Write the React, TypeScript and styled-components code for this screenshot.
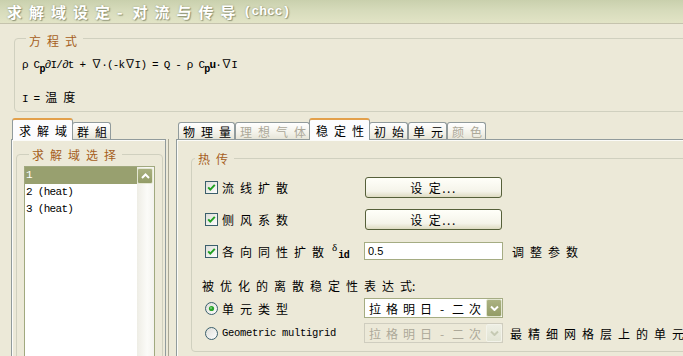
import React from "react"
import styled, { createGlobalStyle } from "styled-components"

const CJK = `"Noto Sans CJK SC", "Liberation Sans", sans-serif`
const MONO = `"Liberation Mono", "Noto Sans CJK SC", monospace`

const GlobalStyle = createGlobalStyle`
  html, body {
    margin: 0;
    padding: 0;
    background: #ece9d8;
    overflow: hidden;
  }
  body {
    font-family: ${CJK};
    font-size: 12px;
    color: #000;
  }
`

const Window = styled.div`
  width: 683px;
  height: 356px;
  overflow: hidden;
  background: #ece9d8;
  display: flex;
  flex-direction: column;
`

const TitleBar = styled.div`
  height: 23px;
  flex: none;
  display: flex;
  align-items: center;
  padding-left: 7px;
  background: linear-gradient(#c9d0ad 0%, #d6dbbb 45%, #e2e4c6 100%);
  border-bottom: 1px solid #c5c3ad;
  color: #fff;
  font-weight: bold;
  text-shadow: 1px 1px 1px rgba(95, 100, 70, 0.55), 0 0 2px rgba(95, 100, 70, 0.4);
  white-space: nowrap;
`

const TitleCJK = styled.span`
  font-family: ${CJK};
  font-size: 15px;
  letter-spacing: 7px;
`

const TitleDash = styled.span`
  font-family: ${CJK};
  font-size: 15px;
  margin-right: 10px;
`

const TitleLatin = styled.span`
  font-family: ${MONO};
  font-size: 13px;
  margin-left: 1px;
`

const Group = styled.fieldset<{ $pad: string; $mt: number; $ml: number; $mr: number }>`
  margin: ${p => p.$mt}px ${p => p.$mr}px 0 ${p => p.$ml}px;
  padding: ${p => p.$pad};
  min-width: 0;
  border: 1px solid #d0d0bf;
  border-radius: 4px;
`

const Legend = styled.legend<{ $dy: number; $x: number }>`
  margin-left: ${p => p.$x}px;
  padding: ${p => p.$dy}px 0 0 3px;
  line-height: 14px;
  font-size: 12px;
  letter-spacing: 6px;
  color: #a65f22;
`

const EqLine = styled.div<{ $mt?: number }>`
  margin-top: ${p => p.$mt || 0}px;
  height: 14px;
  line-height: 14px;
  font-family: ${MONO};
  font-size: 11px;
  letter-spacing: -0.8px;
  white-space: nowrap;
`

const Sub = styled.sub`
  font-size: 10px;
  font-weight: bold;
  vertical-align: -4px;
  line-height: 0;
`

const Bold = styled.b`
  font-weight: bold;
`

const Spaced = styled.span`
  font-family: ${CJK};
  font-size: 12px;
  letter-spacing: 6px;
`

const Lower = styled.div`
  display: flex;
  align-items: flex-start;
  margin-top: 6px;
  flex: 1;
  min-height: 0;
`

const Column = styled.div<{ $w?: number; $ml: number; $mr?: number }>`
  margin-left: ${p => p.$ml}px;
  margin-right: ${p => p.$mr || 0}px;
  width: ${p => (p.$w ? `${p.$w}px` : "auto")};
  flex: ${p => (p.$w ? "none" : "1")};
  display: flex;
  flex-direction: column;
`

const Splitter = styled.div`
  width: 10px;
  height: 300px;
  margin-top: 21px;
  flex: none;
  background: linear-gradient(to right, transparent 2px, #a9a795 2px, #a9a795 3px, transparent 3px);
`

const TabStrip = styled.div<{ $pl: number }>`
  display: flex;
  align-items: flex-end;
  height: 21px;
  padding-left: ${p => p.$pl}px;
  position: relative;
  z-index: 1;
`

const Tab = styled.div<{ $active?: boolean; $disabled?: boolean }>`
  box-sizing: border-box;
  height: ${p => (p.$active ? 22 : 17)}px;
  margin: 0 ${p => (p.$active ? -1 : 0)}px ${p => (p.$active ? -1 : 0)}px;
  padding: ${p => (p.$active ? "1px 5px 0 6px" : "0 3px 0 4px")};
  display: flex;
  align-items: center;
  border: 1px solid #919b9c;
  border-bottom: none;
  border-top: ${p => (p.$active ? "2px solid #e3a04a" : "1px solid #919b9c")};
  border-radius: 3px 3px 0 0;
  background: ${p => (p.$active ? "#fcfcfe" : "linear-gradient(#ffffff, #f3f2ea 60%, #e7e5d8)")};
  color: ${p => (p.$disabled ? "#aca899" : "#000")};
  font-size: 12px;
  letter-spacing: 6px;
  white-space: nowrap;
  position: relative;
  z-index: ${p => (p.$active ? 2 : 0)};
`

const TabText = styled.span`
  margin-right: -6px;
`

const TabBody = styled.div`
  height: 260px;
  border: 1px solid #919b9c;
  box-shadow: inset 1px 1px 0 #fbfbf8;
  background: #ece9d8;
  display: flex;
  flex-direction: column;
`

const ListBox = styled.div`
  height: 200px;
  display: flex;
  border: 1px solid #a1a97f;
  background: #fff;
`

const ListItems = styled.div`
  flex: 1;
  display: flex;
  flex-direction: column;
`

const ListRow = styled.div<{ $selected?: boolean }>`
  height: 17px;
  line-height: 17px;
  padding-left: 1px;
  font-family: ${MONO};
  font-size: 11px;
  letter-spacing: -0.7px;
  background: ${p => (p.$selected ? "#98a06f" : "transparent")};
  color: ${p => (p.$selected ? "#fff" : "#000")};
`

const ScrollTrack = styled.div`
  width: 17px;
  flex: none;
  background: linear-gradient(to right, #eeede5, #fbfbf8 60%, #f4f3ee);
  display: flex;
  flex-direction: column;
  align-items: flex-start;
`

const ScrollButton = styled.div`
  width: 16px;
  height: 16px;
  margin-top: 1px;
  box-sizing: border-box;
  border: 1px solid #e4e7d2;
  border-radius: 2px;
  background: linear-gradient(#a9b07f, #939c67);
  display: flex;
  align-items: center;
  justify-content: center;
`

const Rows = styled.div`
  display: flex;
  flex-direction: column;
  gap: 10px;
  padding-left: 13px;
`

const Row = styled.div`
  height: 22px;
  display: flex;
  align-items: center;
  white-space: nowrap;
`

const LabelCell = styled.div`
  width: 159px;
  flex: none;
  display: flex;
  align-items: center;
`

const Mark = styled.span`
  margin-right: 4px;
  display: flex;
`

const Delta = styled.span`
  display: flex;
  align-items: flex-start;
  height: 18px;
  margin-left: 2px;
`

const DeltaSymbol = styled.span`
  font-family: "Liberation Serif", serif;
  font-size: 11px;
  line-height: 11px;
`

const DeltaSub = styled.span`
  font-family: ${MONO};
  font-size: 10px;
  line-height: 10px;
  font-weight: bold;
  letter-spacing: -0.5px;
  margin: 9px 0 0 1px;
`

const Button = styled.div`
  width: 137px;
  height: 21px;
  margin-left: 1px;
  box-sizing: border-box;
  border: 1px solid #56603a;
  border-radius: 3px;
  background: linear-gradient(#fffff9 0%, #f5f4ea 70%, #dedbc2 100%);
  display: flex;
  align-items: center;
  justify-content: center;
  font-size: 12px;
  letter-spacing: 1.5px;
`

const ButtonFirst = styled.span`
  margin-right: 5px;
`

const TextInput = styled.div`
  width: 139px;
  height: 18px;
  box-sizing: border-box;
  border: 1px solid #a5ac83;
  background: #fff;
  padding-left: 3px;
  display: flex;
  align-items: center;
  font-family: "Liberation Sans", sans-serif;
  font-size: 11px;
`

const After = styled.span<{ $ml: number }>`
  margin-left: ${p => p.$ml}px;
  font-size: 12px;
  letter-spacing: 6px;
`

const SectionLabel = styled.div`
  margin-top: 17px;
  padding-left: 10px;
  height: 14px;
  line-height: 14px;
  font-size: 12px;
  white-space: nowrap;
`

const RadioRows = styled.div`
  display: flex;
  flex-direction: column;
  gap: 3px;
  margin-top: 4px;
  padding-left: 13px;
`

const Latin = styled.span`
  font-family: ${MONO};
  font-size: 10.5px;
  letter-spacing: -0.3px;
`

const Select = styled.div<{ $disabled?: boolean }>`
  width: 139px;
  height: 20px;
  box-sizing: border-box;
  border: 1px solid ${p => (p.$disabled ? "#cfcdbf" : "#a5ac83")};
  background: ${p => (p.$disabled ? "#ece9d8" : "#fff")};
  color: ${p => (p.$disabled ? "#aca899" : "#000")};
  display: flex;
  align-items: center;
  padding-left: 4px;
  font-size: 12px;
  letter-spacing: 5px;
  white-space: nowrap;
`

const SelectText = styled.span`
  flex: 1;
  overflow: hidden;
  display: flex;
  align-items: center;
`

const SelectDash = styled.span`
  display: inline-block;
  width: 12px;
  margin-right: 5px;
  text-align: center;
  letter-spacing: 0;
`

const DropButton = styled.div<{ $disabled?: boolean }>`
  width: 16px;
  height: 18px;
  flex: none;
  box-sizing: border-box;
  border: 1px solid ${p => (p.$disabled ? "#f3f3ea" : "#e2e6cf")};
  border-radius: 2px;
  background: ${p => (p.$disabled ? "linear-gradient(#eeefe4, #e2e4d4)" : "linear-gradient(#abb282, #939c66)")};
  display: flex;
  align-items: center;
  justify-content: center;
`

const CheckBox = () => (
  <svg width="13" height="13" viewBox="0 0 13 13">
    <defs>
      <linearGradient id="cbfill" x1="0" y1="0" x2="1" y2="1">
        <stop offset="0" stopColor="#dcdcd7" />
        <stop offset="1" stopColor="#ffffff" />
      </linearGradient>
    </defs>
    <rect x="0.5" y="0.5" width="12" height="12" fill="url(#cbfill)" stroke="#3b5f6c" />
    <path d="M3.2 6.3 L5.3 8.6 L9.8 3.9" fill="none" stroke="#21a121" strokeWidth="2" />
  </svg>
)

const Radio = ({ on }: { on?: boolean }) => (
  <svg width="13" height="13" viewBox="0 0 13 13">
    <defs>
      <linearGradient id="rbfill" x1="0" y1="0" x2="1" y2="1">
        <stop offset="0" stopColor="#dcdcd7" />
        <stop offset="1" stopColor="#ffffff" />
      </linearGradient>
    </defs>
    <circle cx="6.5" cy="6.5" r="6" fill="url(#rbfill)" stroke="#3b5f6c" />
    {on && <circle cx="6.5" cy="6.5" r="2.6" fill="#2aa52a" />}
    {on && <circle cx="6" cy="6" r="1" fill="#7fd07f" />}
  </svg>
)

const Chevron = ({ up, color }: { up?: boolean; color: string }) => (
  <svg width="9" height="6" viewBox="0 0 9 6">
    <path d={up ? "M1 5 L4.5 1.5 L8 5" : "M1 1.5 L4.5 5 L8 1.5"} fill="none" stroke={color} strokeWidth="2" />
  </svg>
)

const Lagrange = () => (
  <SelectText>
    拉格明日<SelectDash>-</SelectDash>二次
  </SelectText>
)

const SetButton = () => (
  <Button>
    <ButtonFirst>设</ButtonFirst>定...
  </Button>
)

export default function App() {
  return (
    <Window>
      <GlobalStyle />
      <TitleBar>
        <TitleCJK>求解域设定</TitleCJK>
        <TitleDash>-</TitleDash>
        <TitleCJK>对流与传导</TitleCJK>
        <TitleLatin>(chcc)</TitleLatin>
      </TitleBar>

      <Group $pad="10px 10px 7px 7px" $mt={4} $ml={14} $mr={-30}>
        <Legend $dy={6} $x={4}>方程式</Legend>
        <EqLine>
          ρ C<Sub>p</Sub>∂I/∂t + ∇·(-k∇I) = Q - ρ C<Sub>p</Sub><Bold>u</Bold>·∇I
        </EqLine>
        <EqLine $mt={18}>
          I = <Spaced>温度</Spaced>
        </EqLine>
      </Group>

      <Lower>
        <Column $w={155} $ml={11}>
          <TabStrip $pl={2}>
            <Tab $active><TabText>求解域</TabText></Tab>
            <Tab><TabText>群組</TabText></Tab>
          </TabStrip>
          <TabBody>
            <Group $pad="4px 7px 0 7px" $mt={6} $ml={4} $mr={2}>
              <Legend $dy={2} $x={5}>求解域选择</Legend>
              <ListBox>
                <ListItems>
                  <ListRow $selected>1</ListRow>
                  <ListRow>2 (heat)</ListRow>
                  <ListRow>3 (heat)</ListRow>
                </ListItems>
                <ScrollTrack>
                  <ScrollButton>
                    <Chevron up color="#ffffff" />
                  </ScrollButton>
                </ScrollTrack>
              </ListBox>
            </Group>
          </TabBody>
        </Column>

        <Splitter />

        <Column $ml={0} $mr={-30}>
          <TabStrip $pl={2}>
            <Tab><TabText>物理量</TabText></Tab>
            <Tab $disabled><TabText>理想气体</TabText></Tab>
            <Tab $active><TabText>稳定性</TabText></Tab>
            <Tab><TabText>初始</TabText></Tab>
            <Tab><TabText>单元</TabText></Tab>
            <Tab $disabled><TabText>颜色</TabText></Tab>
          </TabStrip>
          <TabBody>
            <Group $pad="10px 0 7px 0" $mt={10} $ml={14} $mr={0}>
              <Legend $dy={2} $x={3}>热传</Legend>
              <Rows>
                <Row>
                  <LabelCell>
                    <Mark><CheckBox /></Mark>
                    <Spaced>流线扩散</Spaced>
                  </LabelCell>
                  <SetButton />
                </Row>
                <Row>
                  <LabelCell>
                    <Mark><CheckBox /></Mark>
                    <Spaced>侧风系数</Spaced>
                  </LabelCell>
                  <SetButton />
                </Row>
                <Row>
                  <LabelCell>
                    <Mark><CheckBox /></Mark>
                    <Spaced>各向同性扩散</Spaced>
                    <Delta>
                      <DeltaSymbol>δ</DeltaSymbol>
                      <DeltaSub>id</DeltaSub>
                    </Delta>
                  </LabelCell>
                  <TextInput>0.5</TextInput>
                  <After $ml={9}>调整参数</After>
                </Row>
              </Rows>
              <SectionLabel>
                <Spaced>被优化的离散稳定性表达</Spaced>式:
              </SectionLabel>
              <RadioRows>
                <Row>
                  <LabelCell>
                    <Mark><Radio on /></Mark>
                    <Spaced>单元类型</Spaced>
                  </LabelCell>
                  <Select>
                    <Lagrange />
                    <DropButton>
                      <Chevron color="#ffffff" />
                    </DropButton>
                  </Select>
                </Row>
                <Row>
                  <LabelCell>
                    <Mark><Radio /></Mark>
                    <Latin>Geometric multigrid</Latin>
                  </LabelCell>
                  <Select $disabled>
                    <Lagrange />
                    <DropButton $disabled>
                      <Chevron color="#c6cab4" />
                    </DropButton>
                  </Select>
                  <After $ml={7}>最精细网格层上的单元</After>
                </Row>
              </RadioRows>
            </Group>
          </TabBody>
        </Column>
      </Lower>
    </Window>
  )
}
